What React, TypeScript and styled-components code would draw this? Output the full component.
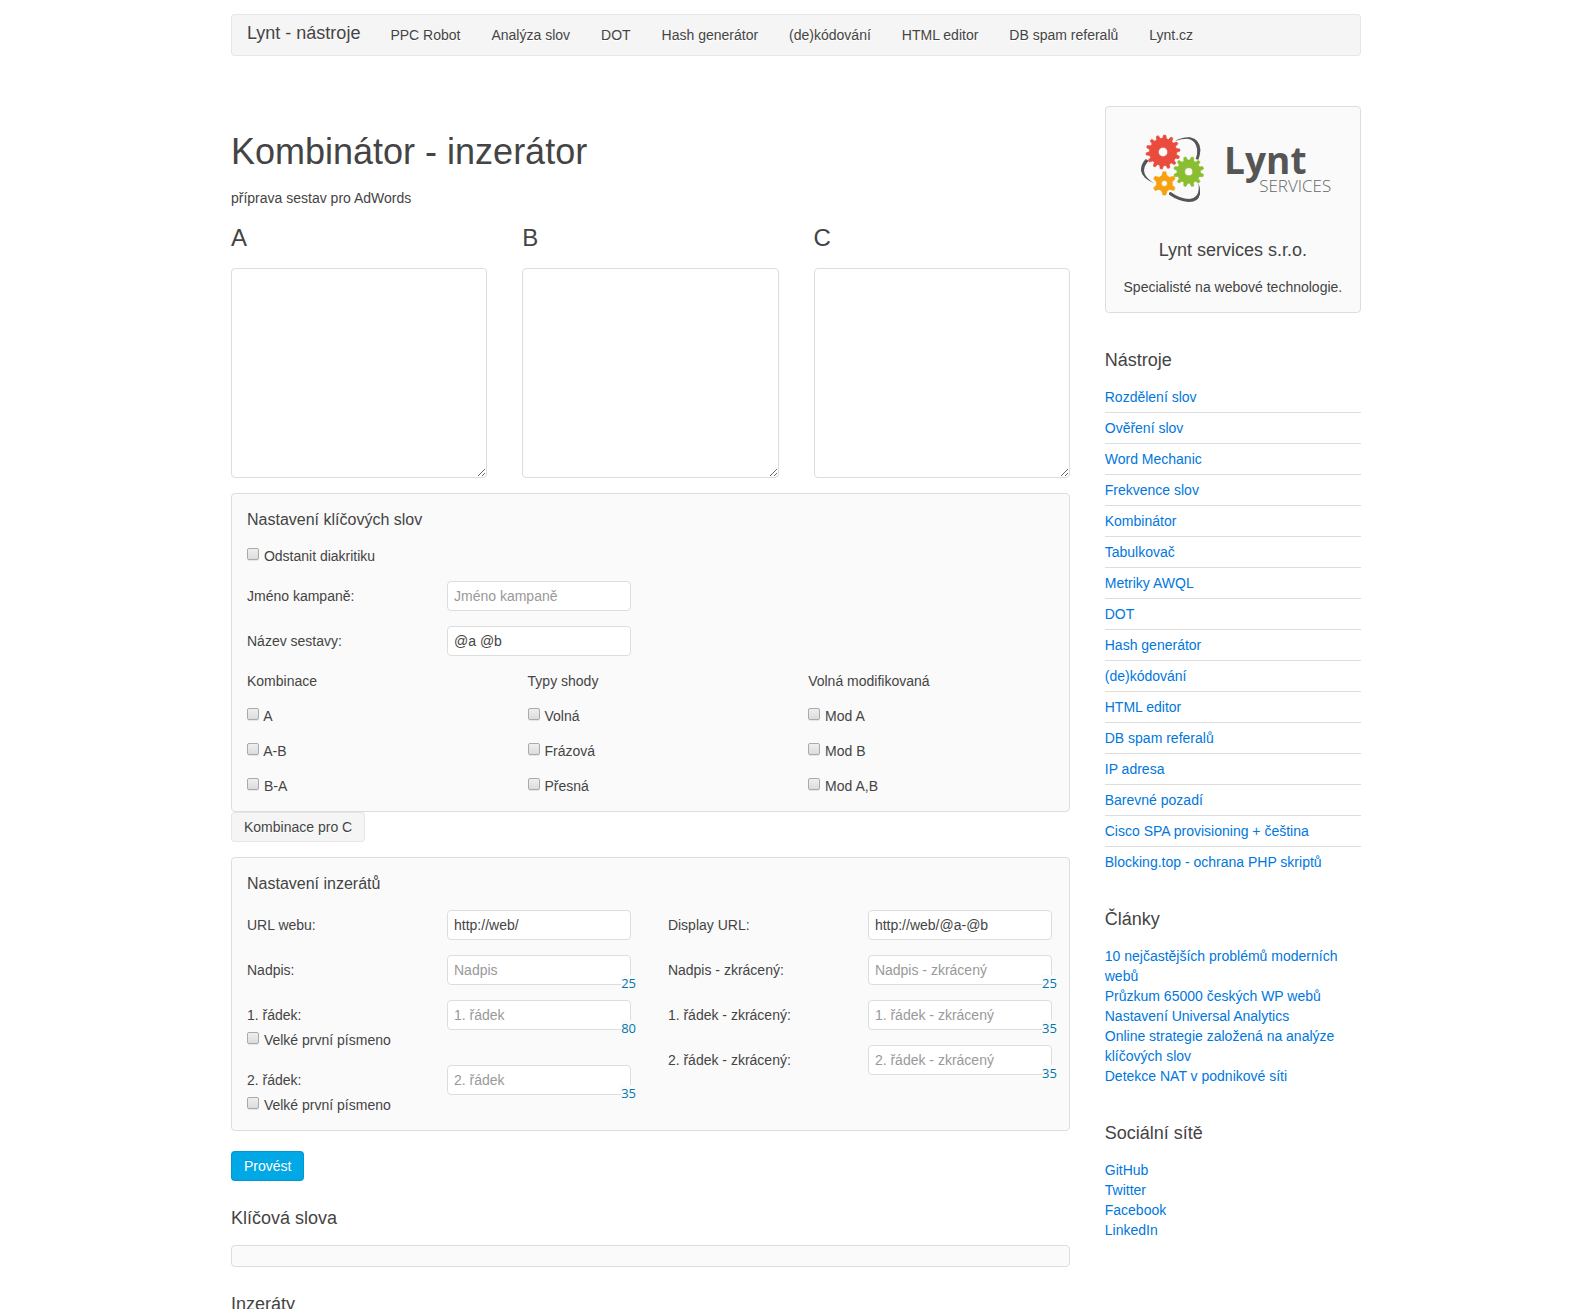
import React, { useId, useState } from 'react';
import styled, { createGlobalStyle, css } from 'styled-components';

const GlobalStyle = createGlobalStyle`
  *, *::before, *::after { box-sizing: border-box; }
  body {
    margin: 0;
    background: #fff;
    color: #444;
    font: 14px/20px "Liberation Sans", Arial, Helvetica, sans-serif;
  }
`;

const Page = styled.div`
  padding: 14px 0 35px 3px;
`;

const Container = styled.div`
  max-width: 1130px;
  margin: 0 auto;
`;

/* ---------- navigation ---------- */

const Navbar = styled.nav`
  display: flex;
  align-items: flex-start;
  padding: 0 15px;
  gap: 30px;
  border: 1px solid rgba(0, 0, 0, 0.06);
  border-radius: 4px;
  background: #f5f5f5;
  text-shadow: 0 1px 0 #fff;
`;

const Brand = styled.a`
  color: #444;
  font-size: 18px;
  line-height: 36px;
  text-decoration: none;
`;

const NavList = styled.ul`
  display: flex;
  gap: 31px;
  margin: 0;
  padding: 0;
  list-style: none;
`;

const NavLink = styled.a`
  display: block;
  color: #444;
  line-height: 40px;
  text-decoration: none;
`;

/* ---------- page grid ---------- */

const Layout = styled.div`
  display: grid;
  grid-template-columns: repeat(4, minmax(0, 1fr));
  column-gap: 35px;
  align-items: start;
  margin-top: 50px;
`;

const Main = styled.main`
  grid-column: span 3;
  padding-top: 25px;
`;

const Sidebar = styled.aside`
  display: flex;
  flex-direction: column;
  gap: 35px;
`;

const Columns = styled.div<{ $count: number }>`
  display: grid;
  grid-template-columns: repeat(${(p) => p.$count}, minmax(0, 1fr));
  column-gap: 35px;
  align-items: start;
`;

const Stack = styled.div`
  display: flex;
  flex-direction: column;
  gap: 15px;
`;

/* ---------- typography ---------- */

const heading = css`
  margin: 0 0 15px;
  font-weight: normal;
`;

const PageTitle = styled.h1`
  ${heading}
  font-size: 36px;
  line-height: 42px;
`;

const ColumnTitle = styled.h2`
  ${heading}
  font-size: 24px;
  line-height: 30px;
`;

const SectionTitle = styled.h3`
  ${heading}
  font-size: 18px;
  line-height: 24px;
`;

const PanelTitle = styled.h4`
  margin: 0;
  font-weight: normal;
  font-size: 16px;
  line-height: 22px;
`;

const Text = styled.p`
  margin: 0 0 15px;
`;

/* ---------- boxes ---------- */

const box = css`
  border: 1px solid #ddd;
  border-radius: 4px;
`;

const Panel = styled.section`
  ${box}
  display: flex;
  flex-direction: column;
  gap: 15px;
  padding: 15px;
  background: #fafafa;
`;

const LogoCard = styled.div`
  ${box}
  padding: 15px;
  background: #fafafa;
  text-align: center;

  svg {
    display: block;
    width: 100%;
    height: auto;
    margin-bottom: 15px;
  }

  p {
    margin: 0;
  }
`;

const Output = styled.pre`
  ${box}
  margin: 0;
  padding: 10px;
  background: #fafafa;
`;

const Result = styled.section`
  margin-top: 25px;
`;

/* ---------- form parts ---------- */

const WordArea = styled.textarea`
  ${box}
  display: block;
  width: 100%;
  padding: 4px 6px;
  background: #fff;
  color: #444;
  font: inherit;
`;

const FieldRow = styled.div`
  display: flex;
  align-items: flex-start;
`;

const FieldCaption = styled.div`
  flex: 0 0 200px;
  padding-top: 5px;
`;

const CaptionLine = styled.div`
  padding-bottom: 5px;
`;

const Control = styled.div`
  position: relative;
  flex: 0 1 184px;
  min-width: 0;
`;

const TextInput = styled.input`
  ${box}
  display: block;
  width: 100%;
  height: 30px;
  padding: 4px 6px;
  background: #fff;
  color: #444;
  font: inherit;

  &::placeholder {
    color: #999;
    opacity: 1;
  }
`;

const Counter = styled.output`
  position: absolute;
  top: 20px;
  right: -5px;
  background: #fafafa;
  color: #07a;
  font-family: "Open Sans", "Noto Sans", sans-serif;
  font-size: 13px;
  line-height: 16px;
`;

const CheckBox = styled.input`
  appearance: none;
  width: 12px;
  height: 12px;
  margin: -6px 1px 0 0;
  vertical-align: middle;
  border: 1px solid #aaa;
  border-radius: 2px;
  background: linear-gradient(#efefef, #dcdcdc);
  box-shadow: 0 1px 0 rgba(0, 0, 0, 0.08);

  &:checked {
    background: #666;
  }
`;

const Button = styled.button<{ $primary?: boolean }>`
  display: block;
  height: 30px;
  padding: 0 12px;
  border: 1px solid ${(p) => (p.$primary ? 'rgba(0, 0, 0, 0.1)' : 'rgba(0, 0, 0, 0.06)')};
  border-radius: 4px;
  background: ${(p) => (p.$primary ? '#00a8e6' : '#f5f5f5')};
  color: ${(p) => (p.$primary ? '#fff' : '#444')};
  font: inherit;
  text-shadow: ${(p) => (p.$primary ? '0 -1px 0 rgba(0, 0, 0, 0.1)' : '0 1px 0 #fff')};
  cursor: pointer;
`;

const Toggle = styled.div`
  margin-bottom: 15px;
`;

const Submit = styled.div`
  margin-top: 20px;
`;

/* ---------- sidebar lists ---------- */

const LinkList = styled.ul<{ $lined?: boolean }>`
  margin: 0;
  padding: 0;
  list-style: none;

  ${(p) =>
    p.$lined &&
    css`
      li + li {
        margin-top: 5px;
        padding-top: 5px;
        border-top: 1px solid #ddd;
      }
    `}
`;

const Link = styled.a`
  color: #07d;
  text-decoration: none;

  &:hover {
    text-decoration: underline;
  }
`;

const navItems = ['PPC Robot', 'Analýza slov', 'DOT', 'Hash generátor', '(de)kódování', 'HTML editor', 'DB spam referalů', 'Lynt.cz'];

const tools = [
  'Rozdělení slov', 'Ověření slov', 'Word Mechanic', 'Frekvence slov', 'Kombinátor', 'Tabulkovač',
  'Metriky AWQL', 'DOT', 'Hash generátor', '(de)kódování', 'HTML editor', 'DB spam referalů', 'IP adresa',
  'Barevné pozadí', 'Cisco SPA provisioning + čeština', 'Blocking.top - ochrana PHP skriptů',
];

const articles = [
  '10 nejčastějších problémů moderních webů',
  'Průzkum 65000 českých WP webů',
  'Nastavení Universal Analytics',
  'Online strategie založená na analýze klíčových slov',
  'Detekce NAT v podnikové síti',
];

const social = ['GitHub', 'Twitter', 'Facebook', 'LinkedIn'];

const optionGroups = [
  { title: 'Kombinace', options: ['A', 'A-B', 'B-A'] },
  { title: 'Typy shody', options: ['Volná', 'Frázová', 'Přesná'] },
  { title: 'Volná modifikovaná', options: ['Mod A', 'Mod B', 'Mod A,B'] },
];

function Check({ label }: { label: string }) {
  const id = useId();
  return (
    <div>
      <CheckBox type="checkbox" id={id} /> <label htmlFor={id}>{label}</label>
    </div>
  );
}

interface FieldProps {
  label: string;
  placeholder?: string;
  value?: string;
  limit?: number;
  capitalize?: boolean;
}

function Field({ label, placeholder, value = '', limit, capitalize }: FieldProps) {
  const id = useId();
  const [text, setText] = useState(value);
  return (
    <FieldRow>
      <FieldCaption>
        {capitalize ? (
          <>
            <CaptionLine><label htmlFor={id}>{label}</label></CaptionLine>
            <Check label="Velké první písmeno" />
          </>
        ) : (
          <label htmlFor={id}>{label}</label>
        )}
      </FieldCaption>
      <Control>
        <TextInput id={id} type="text" placeholder={placeholder} value={text} onChange={(e) => setText(e.target.value)} />
        {limit !== undefined && <Counter htmlFor={id}>{limit - text.length}</Counter>}
      </Control>
    </FieldRow>
  );
}

function WordColumn({ name }: { name: string }) {
  const id = useId();
  return (
    <div>
      <ColumnTitle><label htmlFor={id}>{name}</label></ColumnTitle>
      <WordArea id={id} rows={10} />
    </div>
  );
}

function Links({ items, lined }: { items: string[]; lined?: boolean }) {
  return (
    <LinkList $lined={lined}>
      {items.map((item) => (
        <li key={item}><Link href="#">{item}</Link></li>
      ))}
    </LinkList>
  );
}

interface GearProps {
  cx: number;
  cy: number;
  outer: number;
  inner: number;
  hole: number;
  teeth: number;
  color: string;
  tip?: number;
  turn?: number;
}

/* A toothed ring: each tooth narrows from its root to its rounded tip. */
function Gear({ cx, cy, outer, inner, hole, teeth, color, tip = 0.14, turn = 0 }: GearProps) {
  const step = (Math.PI * 2) / teeth;
  const points: string[] = [];
  for (let i = 0; i < teeth; i += 1) {
    const mid = i * step - Math.PI / 2 + (turn * Math.PI) / 180;
    const corners: [number, number][] = [[-0.32, inner], [-tip, outer], [tip, outer], [0.32, inner]];
    corners.forEach(([offset, radius]) => {
      const angle = mid + offset * step;
      points.push(`${(cx + radius * Math.cos(angle)).toFixed(2)} ${(cy + radius * Math.sin(angle)).toFixed(2)}`);
    });
  }
  const ring = `M${cx - hole} ${cy}a${hole} ${hole} 0 1 0 ${hole * 2} 0a${hole} ${hole} 0 1 0 ${-hole * 2} 0Z`;
  return (
    <path d={`M${points.join('L')}Z${ring}`} fill={color} fillRule="evenodd" stroke={color} strokeWidth="2" strokeLinejoin="round" />
  );
}

function Logo() {
  return (
    <svg viewBox="0 0 224 101" role="img" aria-label="Lynt services">
      <g transform="translate(9 3) scale(0.3333)">
        <g fill="#555">
          <path d="M135 48Q158 35 180 37Q210 43 211 75Q210 92 205 104L197 102Q203 85 201 72Q196 44 172 41Q155 41 135 48Z" />
          <path d="M47 102Q32 118 33 137Q36 160 74 175Q43 158 42 137Q42 122 56 107Z" />
          <path d="M122 201Q150 222 178 222Q205 218 206 190Q206 182 205 172Q212 190 210 207Q205 232 175 231Q145 228 117 209Q115 202 122 201Z" />
        </g>
        <Gear cx={99} cy={81} outer={51} inner={41} hole={14} teeth={14} color="#e94b3c" turn={6} />
        <Gear cx={176} cy={140} outer={45} inner={35} hole={12} teeth={12} color="#8abd2f" turn={-15} />
        <Gear cx={103} cy={175} outer={35} inner={24} hole={9} teeth={6} tip={0.12} color="#f8a110" />
      </g>
      <text x="103" y="52" fill="#555" fontFamily="Open Sans, Noto Sans, sans-serif" fontWeight="700" fontSize="37">Lynt</text>
      <text x="138" y="70" fill="#666" fontFamily="Open Sans, Noto Sans, sans-serif" fontWeight="300" fontSize="17">SERVICES</text>
    </svg>
  );
}

export default function App() {
  return (
    <Page>
      <GlobalStyle />
      <Container>
        <Navbar>
          <Brand href="#">Lynt - nástroje</Brand>
          <NavList>
            {navItems.map((item) => (
              <li key={item}><NavLink href="#">{item}</NavLink></li>
            ))}
          </NavList>
        </Navbar>

        <Layout>
          <Main>
            <PageTitle>Kombinátor - inzerátor</PageTitle>
            <Text>příprava sestav pro AdWords</Text>

            <form onSubmit={(e) => e.preventDefault()}>
              <Stack>
                <Columns $count={3}>
                  <WordColumn name="A" />
                  <WordColumn name="B" />
                  <WordColumn name="C" />
                </Columns>

                <div>
                  <Panel>
                    <PanelTitle>Nastavení klíčových slov</PanelTitle>
                    <Check label="Odstanit diakritiku" />
                    <Field label="Jméno kampaně:" placeholder="Jméno kampaně" />
                    <Field label="Název sestavy:" value="@a @b" />
                    <Columns $count={3}>
                      {optionGroups.map((group) => (
                        <Stack key={group.title} role="group" aria-label={group.title}>
                          <div>{group.title}</div>
                          {group.options.map((option) => (
                            <Check key={option} label={option} />
                          ))}
                        </Stack>
                      ))}
                    </Columns>
                  </Panel>
                  <Toggle>
                    <Button type="button">Kombinace pro C</Button>
                  </Toggle>

                  <Panel>
                    <PanelTitle>Nastavení inzerátů</PanelTitle>
                    <Columns $count={2}>
                      <Stack>
                        <Field label="URL webu:" value="http://web/" />
                        <Field label="Nadpis:" placeholder="Nadpis" limit={25} />
                        <Field label="1. řádek:" placeholder="1. řádek" limit={80} capitalize />
                        <Field label="2. řádek:" placeholder="2. řádek" limit={35} capitalize />
                      </Stack>
                      <Stack>
                        <Field label="Display URL:" value="http://web/@a-@b" />
                        <Field label="Nadpis - zkrácený:" placeholder="Nadpis - zkrácený" limit={25} />
                        <Field label="1. řádek - zkrácený:" placeholder="1. řádek - zkrácený" limit={35} />
                        <Field label="2. řádek - zkrácený:" placeholder="2. řádek - zkrácený" limit={35} />
                      </Stack>
                    </Columns>
                  </Panel>
                  <Submit>
                    <Button $primary type="submit">Provést</Button>
                  </Submit>
                </div>
              </Stack>
            </form>

            <Result>
              <SectionTitle>Klíčová slova</SectionTitle>
              <Output />
            </Result>
            <Result>
              <SectionTitle>Inzeráty</SectionTitle>
              <Output />
            </Result>
          </Main>

          <Sidebar>
            <LogoCard>
              <Logo />
              <SectionTitle>Lynt services s.r.o.</SectionTitle>
              <p>Specialisté na webové technologie.</p>
            </LogoCard>
            <section>
              <SectionTitle>Nástroje</SectionTitle>
              <Links items={tools} lined />
            </section>
            <section>
              <SectionTitle>Články</SectionTitle>
              <Links items={articles} />
            </section>
            <section>
              <SectionTitle>Sociální sítě</SectionTitle>
              <Links items={social} />
            </section>
          </Sidebar>
        </Layout>
      </Container>
    </Page>
  );
}
